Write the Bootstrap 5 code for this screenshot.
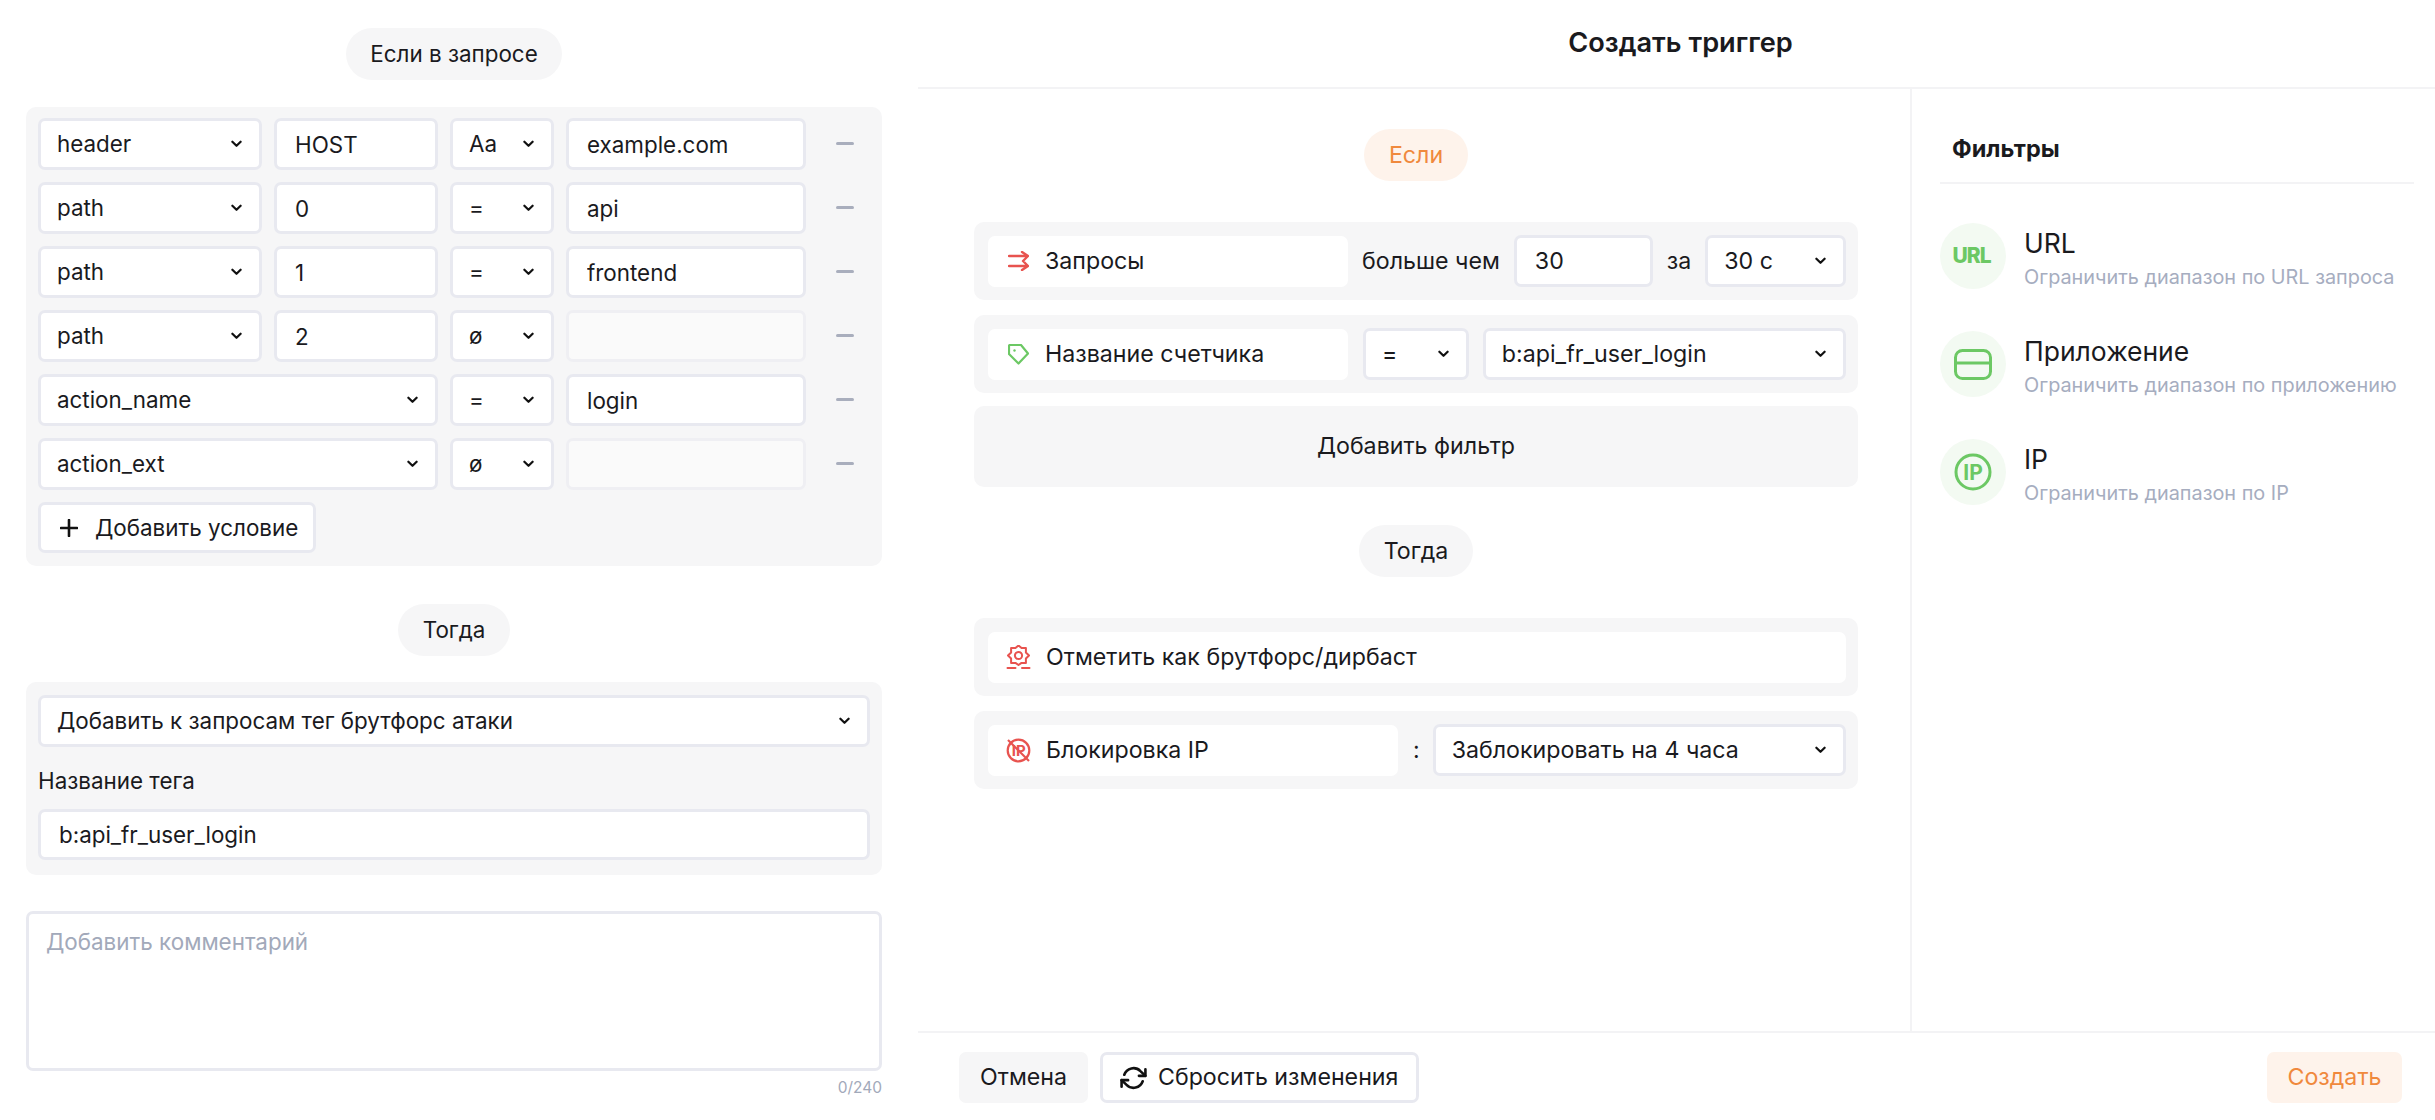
<!DOCTYPE html>
<html lang="ru">
  <head>
    <meta charset="UTF-8" />
    <meta name="viewport" content="width=device-width, initial-scale=1.0" />
    <title>Создать триггер</title>
    <link
      href="https://cdn.jsdelivr.net/npm/bootstrap@5.3.0/dist/css/bootstrap.min.css"
      rel="stylesheet"
    />
    <style>
      body {
        height: 1120px;
        overflow: hidden;
        background: #fff;
        color: #1a1a1e;
        font-family: Inter, "Liberation Sans", sans-serif;
        font-size: 22.4px;
      }

      /* form fields */
      .form-control,
      .form-select {
        height: 52px;
        padding: 0 18px;
        border: 3px solid #e8e9f0;
        border-radius: 7px;
        font-size: 22.4px;
        color: #1a1a1e;
        box-shadow: none;
      }

      .form-select {
        padding: 0 30px 0 16px;
        background-image: url("data:image/svg+xml,%3csvg xmlns='http://www.w3.org/2000/svg' viewBox='0 0 12 8'%3e%3cpath fill='none' stroke='%23111' stroke-width='2.4' stroke-linecap='round' stroke-linejoin='round' d='M1.5 1.5 6 6l4.500-4.500'/%3e%3c/svg%3e");
        background-position: right 17px center;
        background-size: 11px 8px;
      }

      .form-control:disabled {
        background: #fafafa;
        border-color: #efeff3;
      }

      textarea.form-control {
        height: 160px;
        padding: 11px 17px;
        resize: none;
      }

      textarea.form-control::placeholder {
        color: #a2a9ba;
      }

      .w-sel { width: 224px; }
      .w-key { width: 164px; }
      .w-op { width: 104px; }
      .w-val { width: 240px; }
      .w-wide { width: 400px; }

      /* left pane */
      .left-pane {
        width: 918px;
        flex-shrink: 0;
        padding: 28px 36px 0 26px;
      }

      .step-pill {
        display: inline-block;
        height: 52px;
        padding: 0 24.5px;
        line-height: 52px;
        background: #f6f6f7;
        border-radius: 26px;
      }

      .step-pill.is-orange {
        background: #fef3eb;
        color: #f0893d;
      }

      .gray-box {
        background: #f6f6f7;
        border-radius: 10px;
      }

      .cond-box {
        margin-top: 27px;
        padding: 11px 12px 13px;
      }

      .cond-row {
        display: flex;
        gap: 12px;
        margin-bottom: 12px;
      }

      .minus-btn {
        width: 18px;
        height: 3px;
        margin: 24px 0 0 18px;
        background: #a9aebd;
        border-radius: 2px;
      }

      .add-cond {
        display: flex;
        align-items: center;
        gap: 17px;
        width: 278px;
        height: 51px;
        padding: 0 0 0 19px;
        background: #fff;
        border: 3px solid #e8e9f0;
        border-radius: 7px;
        font-size: 22.4px;
        color: #1a1a1e;
        white-space: nowrap;
      }

      .then-box {
        margin-top: 26px;
        padding: 13px 12px 15px;
      }

      .tag-label {
        margin: 18px 0 12px;
        line-height: 32px;
      }

      .then-box .form-control {
        height: 51px;
      }

      .count-note {
        margin-top: 5px;
        text-align: right;
        font-size: 15.5px;
        color: #a2a9ba;
      }

      /* right pane */
      .right-pane {
        flex-grow: 1;
        min-width: 0;
        font-size: 23.2px;
      }

      .right-pane .form-control,
      .right-pane .form-select {
        font-size: 23.2px;
      }

      .pane-head {
        height: 89px;
        padding-left: 8px;
        border-bottom: 2px solid #f3f3f5;
        font-size: 27.2px;
        font-weight: 600;
      }

      .pane-body {
        height: 944px;
        border-bottom: 2px solid #f3f3f5;
      }

      .main-col {
        width: 992px;
        flex-shrink: 0;
        padding: 40px 52px 0 56px;
      }

      .trig-row {
        display: flex;
        align-items: center;
        height: 78px;
        padding: 0 12px 0 14px;
        white-space: nowrap;
      }

      .trig-label {
        display: flex;
        align-items: center;
        gap: 16px;
        height: 51px;
        padding-left: 20px;
        background: #fff;
        border-radius: 7px;
      }

      .trig-label.is-big-ico {
        padding-left: 18px;
        gap: 15px;
      }

      .add-filter {
        height: 81px;
        margin-top: 13px;
        background: #f6f6f7;
        border: 0;
        border-radius: 10px;
        width: 100%;
        font-size: 23.2px;
        color: #1a1a1e;
      }

      .side-col {
        flex-grow: 1;
        padding: 0 21px 0 28px;
        border-left: 2px solid #f3f3f5;
      }

      .side-title {
        height: 95px;
        margin-bottom: 39px;
        padding: 42px 0 0 12px;
        line-height: 36px;
        border-bottom: 2px solid #f3f3f5;
        font-size: 23.5px;
        font-weight: 700;
      }

      .filter-item {
        display: flex;
        gap: 18px;
        height: 66px;
        margin-bottom: 42px;
      }

      .filter-ico {
        display: flex;
        align-items: center;
        justify-content: center;
        width: 66px;
        height: 66px;
        flex-shrink: 0;
        background: #f3faf2;
        border-radius: 50%;
      }

      .filter-name {
        font-size: 26.5px;
        line-height: 36px;
        margin-top: 2px;
      }

      .filter-sub {
        font-size: 19.85px;
        line-height: 32px;
        color: #a6adbf;
        white-space: nowrap;
      }

      .url-mark {
        margin-right: 3px;
        font-size: 21px;
        font-weight: 800;
        letter-spacing: -1px;
        color: #6cc864;
      }

      .pane-foot {
        height: 87px;
        padding: 19px 33px 0 41px;
      }

      .foot-btn {
        height: 51px;
        padding: 0 21px;
        border: 0;
        border-radius: 7px;
        font-size: 23.2px;
        color: #1a1a1e;
        background: #f6f6f7;
      }

      .foot-btn.is-line {
        display: flex;
        align-items: center;
        gap: 11px;
        margin-left: 12px;
        padding: 0 18px 0 17px;
        background: #fff;
        border: 3px solid #e8e9f0;
      }

      .foot-btn.is-orange {
        width: 135px;
        padding: 0;
        background: #fef3eb;
        color: #f0893d;
      }
    </style>
  </head>
  <body class="d-flex">
    <!-- Left: conditions -->
    <div class="left-pane">
      <div class="text-center"><span class="step-pill">Если в запросе</span></div>

      <div class="gray-box cond-box">
        <div class="cond-row">
          <select class="form-select w-sel"><option>header</option></select>
          <input class="form-control w-key" value="HOST" />
          <select class="form-select w-op"><option>Aa</option></select>
          <input class="form-control w-val" value="example.com" />
          <div class="minus-btn"></div>
        </div>
        <div class="cond-row">
          <select class="form-select w-sel"><option>path</option></select>
          <input class="form-control w-key" value="0" />
          <select class="form-select w-op"><option>=</option></select>
          <input class="form-control w-val" value="api" />
          <div class="minus-btn"></div>
        </div>
        <div class="cond-row">
          <select class="form-select w-sel"><option>path</option></select>
          <input class="form-control w-key" value="1" />
          <select class="form-select w-op"><option>=</option></select>
          <input class="form-control w-val" value="frontend" />
          <div class="minus-btn"></div>
        </div>
        <div class="cond-row">
          <select class="form-select w-sel"><option>path</option></select>
          <input class="form-control w-key" value="2" />
          <select class="form-select w-op"><option>ø</option></select>
          <input class="form-control w-val" disabled />
          <div class="minus-btn"></div>
        </div>
        <div class="cond-row">
          <select class="form-select w-wide"><option>action_name</option></select>
          <select class="form-select w-op"><option>=</option></select>
          <input class="form-control w-val" value="login" />
          <div class="minus-btn"></div>
        </div>
        <div class="cond-row">
          <select class="form-select w-wide"><option>action_ext</option></select>
          <select class="form-select w-op"><option>ø</option></select>
          <input class="form-control w-val" disabled />
          <div class="minus-btn"></div>
        </div>
        <button class="add-cond" type="button">
          <svg width="18" height="18" viewBox="0 0 18 18">
            <path d="M9 1v16M1 9h16" stroke="#111" stroke-width="2.6" stroke-linecap="round" />
          </svg>
          Добавить условие
        </button>
      </div>

      <div class="text-center" style="margin-top: 38px"><span class="step-pill">Тогда</span></div>

      <div class="gray-box then-box">
        <select class="form-select"><option>Добавить к запросам тег брутфорс атаки</option></select>
        <div class="tag-label">Название тега</div>
        <input class="form-control" value="b:api_fr_user_login" />
      </div>

      <textarea class="form-control" style="margin-top: 36px" placeholder="Добавить комментарий"></textarea>
      <div class="count-note">0/240</div>
    </div>

    <!-- Right: trigger editor -->
    <div class="right-pane">
      <div class="pane-head d-flex align-items-center justify-content-center">Создать триггер</div>

      <div class="pane-body d-flex">
        <div class="main-col">
          <div class="text-center"><span class="step-pill is-orange">Если</span></div>

          <div class="gray-box trig-row" style="margin-top: 41px">
            <div class="trig-label flex-shrink-0" style="width: 360px">
              <svg width="21" height="20" viewBox="0 0 21 20" fill="none" stroke="#e8534f" stroke-width="2.400" stroke-linecap="round" stroke-linejoin="round">
                <path d="M1 5h19M1 15h19M14 1l6 4-5 5 5 5-6 4" />
              </svg>
              Запросы
            </div>
            <span style="margin-left: 14px">больше чем</span>
            <input class="form-control" style="width: 139px; margin-left: 14px" value="30" />
            <span style="margin: 0 14px">за</span>
            <select class="form-select" style="width: 142px"><option>30 с</option></select>
          </div>

          <div class="gray-box trig-row" style="margin-top: 15px">
            <div class="trig-label flex-shrink-0" style="width: 360px">
              <svg width="21" height="21" viewBox="0 0 21 21" fill="none" stroke="#6cc864" stroke-width="2.200" stroke-linejoin="round">
                <path d="M1 2a1 1 0 0 1 1-1h11l7 8.500-9.500 10L1 10z" />
                <circle cx="6.500" cy="6.500" r="1.200" fill="#6cc864" stroke="none" />
              </svg>
              Название счетчика
            </div>
            <select class="form-select" style="width: 106px; margin-left: 15px"><option>=</option></select>
            <select class="form-select" style="width: 364px; margin-left: 14px"><option>b:api_fr_user_login</option></select>
          </div>

          <button class="add-filter" type="button">Добавить фильтр</button>

          <div class="text-center" style="margin-top: 38px"><span class="step-pill">Тогда</span></div>

          <div class="gray-box trig-row" style="margin-top: 41px">
            <div class="trig-label is-big-ico flex-grow-1">
              <svg width="25" height="24" viewBox="0 0 25 24" fill="none" stroke="#e8534f" stroke-width="2" stroke-linejoin="round" stroke-linecap="round">
                <path d="M12.500 0.500 15.560 3.110 19.920 3.080 19.890 7.440 23 10.500 19.890 13.560 19.920 17.920 15.560 17.890 12.500 20 9.440 17.890 5.080 17.920 5.110 13.560 2 10.500 5.110 7.440 5.080 3.080 9.440 3.110z" />
                <circle cx="12.500" cy="10.500" r="3.600" />
                <path d="M1.500 23h8M16 23h7.500" />
              </svg>
              Отметить как брутфорс/дирбаст
            </div>
          </div>

          <div class="gray-box trig-row" style="margin-top: 15px">
            <div class="trig-label is-big-ico flex-shrink-0" style="width: 410px">
              <svg width="25" height="25" viewBox="0 0 25 25" fill="none" stroke="#e8534f" stroke-width="2.200">
                <circle cx="12.500" cy="12.500" r="10.800" />
                <path d="M2 2l21 21" />
                <text x="12.800" y="18" text-anchor="middle" font-family="Inter, sans-serif" font-size="15" font-weight="700" fill="#e8534f" stroke="none">IP</text>
              </svg>
              Блокировка IP
            </div>
            <span style="margin: 0 13px 0 15px">:</span>
            <select class="form-select" style="width: 413px"><option>Заблокировать на 4 часа</option></select>
          </div>
        </div>

        <div class="side-col">
          <div class="side-title">Фильтры</div>

          <div class="filter-item">
            <div class="filter-ico"><span class="url-mark">URL</span></div>
            <div>
              <div class="filter-name">URL</div>
              <div class="filter-sub">Ограничить диапазон по URL запроса</div>
            </div>
          </div>

          <div class="filter-item">
            <div class="filter-ico">
              <svg width="38" height="31" viewBox="0 0 38 31" fill="none" stroke="#6cc864" stroke-width="3">
                <rect x="1.500" y="1.500" width="35" height="28" rx="7" />
                <path d="M1.500 14h35" />
              </svg>
            </div>
            <div>
              <div class="filter-name">Приложение</div>
              <div class="filter-sub">Ограничить диапазон по приложению</div>
            </div>
          </div>

          <div class="filter-item">
            <div class="filter-ico">
              <svg width="38" height="38" viewBox="0 0 38 38" fill="none" stroke="#6cc864" stroke-width="3">
                <circle cx="19" cy="19" r="17" />
                <text x="19" y="26.500" text-anchor="middle" font-family="Inter, sans-serif" font-size="21" font-weight="700" fill="#6cc864" stroke="none">IP</text>
              </svg>
            </div>
            <div>
              <div class="filter-name">IP</div>
              <div class="filter-sub">Ограничить диапазон по IP</div>
            </div>
          </div>
        </div>
      </div>

      <div class="pane-foot d-flex align-items-start">
        <button class="foot-btn" type="button">Отмена</button>
        <button class="foot-btn is-line" type="button">
          <svg width="27" height="26" viewBox="0 0 24 24" fill="none" stroke="#111" stroke-width="2.400" stroke-linecap="round" stroke-linejoin="round">
            <path d="M23 4v6h-6M1 20v-6h6" />
            <path d="M3.500 9A9 9 0 0 1 18.400 5.600L23 10M1 14l4.600 4.400A9 9 0 0 0 20.500 15" />
          </svg>
          Сбросить изменения
        </button>
        <button class="foot-btn is-orange ms-auto" type="button">Создать</button>
      </div>
    </div>

    <script src="https://cdn.jsdelivr.net/npm/bootstrap@5.3.0/dist/js/bootstrap.bundle.min.js"></script>
  </body>
</html>
